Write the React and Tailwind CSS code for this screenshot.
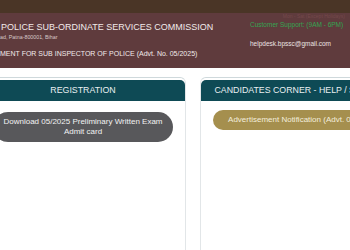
import React from 'react'

function Panel({ title, children }) {
  return (
    <div className="w-[206px] shrink-0 h-[190px] border border-[#e2e6e8] border-t-[#cfd9dc] rounded-t-[6px] pt-[2px]">
      <div className="h-[21px] bg-[#0e4a55] rounded-t-[5px] flex items-center justify-center text-[8.8px] text-[#e9eff1] whitespace-nowrap">
        {title}
      </div>
      {children}
    </div>
  )
}

export default function App() {
  return (
    <div className="w-[350px] h-[250px] overflow-hidden bg-white font-['Liberation_Sans',Arial,sans-serif]">
      {/* top strip */}
      <div className="h-[13px] bg-[#4a3526]" />

      {/* header */}
      <header className="h-[55px] bg-[#5f3b3d] flex justify-between">
        <div className="flex flex-col pt-[9px] whitespace-nowrap">
          <h1 className="text-[9px] leading-[11px] text-[#f1eaea] pl-[1px]">
            POLICE SUB-ORDINATE SERVICES COMMISSION
          </h1>
          <p className="mt-[1px] text-[5.3px] leading-[7px] text-[#d9c9c9]">ad, Patna-800001, Bihar</p>
          <p className="mt-[8px] text-[7px] leading-[9px] text-[#f1eaea]">
            MENT FOR SUB INSPECTOR OF POLICE (Advt. No. 05/2025)
          </p>
        </div>
        <div className="w-[100px] flex flex-col whitespace-nowrap">
          <p className="text-[5px] leading-[6px] text-[#74494b] text-right pr-[5px]">Mon - Sat (Except Holidays)</p>
          <p className="mt-[2px] text-[6.5px] leading-[8px] text-[#34a552]">Customer Support: (9AM - 6PM)</p>
          <p className="mt-[11px] text-[6.5px] leading-[8px] text-[#ece3e3]">helpdesk.bpssc@gmail.com</p>
        </div>
      </header>

      {/* panels */}
      <div className="mt-[9px] -ml-[20px] flex gap-[14px]">
        <Panel title="REGISTRATION">
          <div className="mt-[11px] mx-[12px] h-[30px] rounded-[15px] bg-[#58585b] flex items-center justify-center text-center text-[8px] leading-[10.5px] text-[#f2f2f2]">
            Download 05/2025 Preliminary Written Exam
            <br />
            Admit card
          </div>
        </Panel>
        <Panel title="CANDIDATES CORNER - HELP / SUPPORT">
          <div className="mt-[9px] mx-[12px] h-[20px] rounded-[10px] bg-[#a58f4e] flex items-center justify-center text-[8px] text-[#f3eedd] whitespace-nowrap">
            Advertisement Notification (Advt. 05/2025)
          </div>
        </Panel>
      </div>
    </div>
  )
}
